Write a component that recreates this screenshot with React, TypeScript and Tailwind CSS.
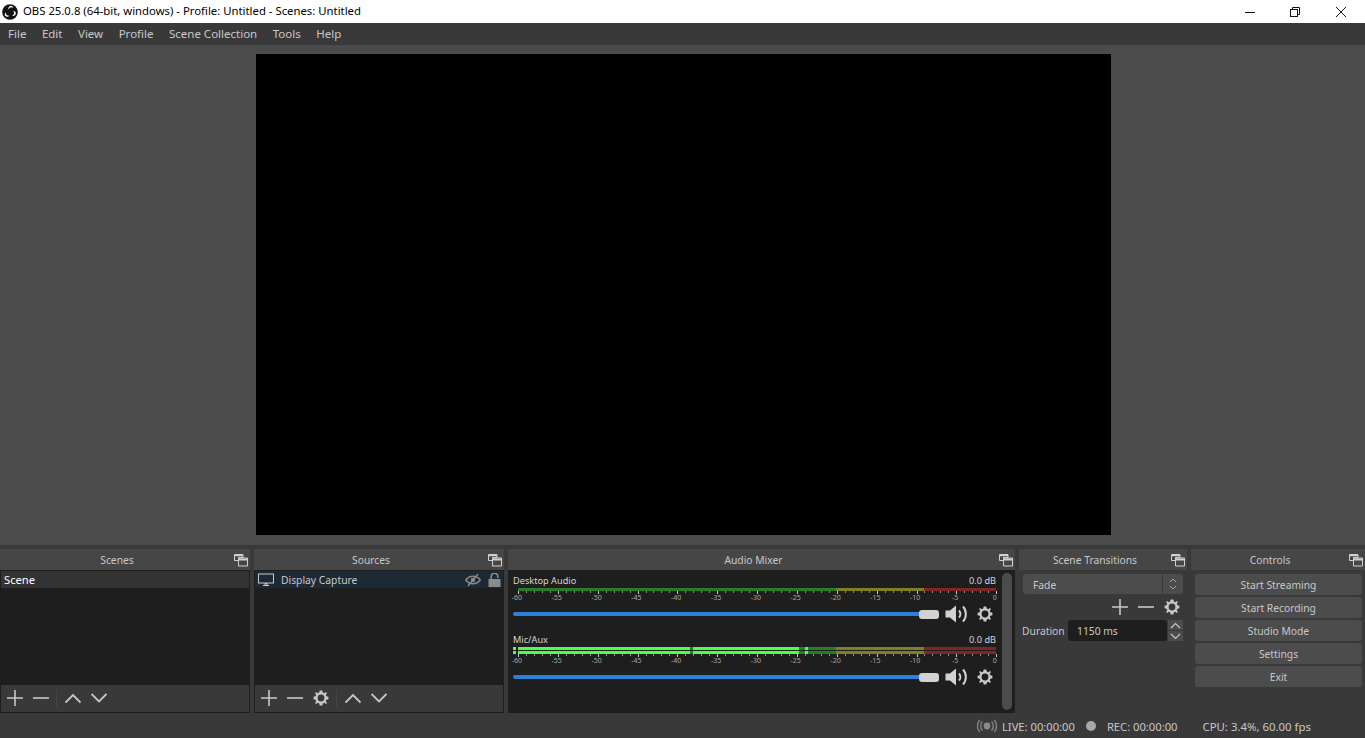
import React from "react";

const cog = "M8 0.6 L9.3 0.6 L9.8 2.6 L11.2 3.2 L13 2.1 L13.9 3 L12.8 4.8 L13.4 6.2 L15.4 6.7 L15.4 9.3 L13.4 9.8 L12.8 11.2 L13.9 13 L13 13.9 L11.2 12.8 L9.8 13.4 L9.3 15.4 L6.7 15.4 L6.2 13.4 L4.8 12.8 L3 13.9 L2.1 13 L3.2 11.2 L2.6 9.8 L0.6 9.3 L0.6 6.7 L2.6 6.2 L3.2 4.8 L2.1 3 L3 2.1 L4.8 3.2 L6.2 2.6 L6.7 0.6 Z";

function Gear() {
  return (
    <svg width="16" height="16" viewBox="0 0 16 16">
      <path d={cog} fill="#c8c8c8" />
      <circle cx="8" cy="8" r="3.4" fill="#3a393a" />
    </svg>
  );
}
function GearDark() {
  return (
    <svg width="16" height="16" viewBox="0 0 16 16">
      <path d={cog} fill="#c8c8c8" />
      <circle cx="8" cy="8" r="3.4" fill="#1f1e1f" />
    </svg>
  );
}
function Plus() {
  return (
    <svg width="16" height="16" viewBox="0 0 16 16">
      <path d="M8 0v16M0 8h16" stroke="#c8c8c8" strokeWidth="1.6" />
    </svg>
  );
}
function Minus() {
  return (
    <svg width="16" height="16" viewBox="0 0 16 16">
      <path d="M0 8h16" stroke="#c8c8c8" strokeWidth="1.6" />
    </svg>
  );
}
function Up() {
  return (
    <svg width="16" height="16" viewBox="0 0 16 16">
      <path d="M0.5 12.5L8 5l7.5 7.5" fill="none" stroke="#c8c8c8" strokeWidth="1.8" />
    </svg>
  );
}
function Down() {
  return (
    <svg width="16" height="16" viewBox="0 0 16 16">
      <path d="M0.5 4L8 11.5 15.5 4" fill="none" stroke="#c8c8c8" strokeWidth="1.8" />
    </svg>
  );
}
function Floating() {
  return (
    <svg width="14" height="14" viewBox="0 0 14 14" fill="none">
      <path d="M0.5 1.5h8.5v3H4.5v3h-4z" stroke="#d0d0d0" strokeWidth="1" />
      <path d="M4.5 5h9v8h-9z" fill="#464646" stroke="#d0d0d0" strokeWidth="1" />
      <path d="M4.5 6.5h9" stroke="#d0d0d0" strokeWidth="2" />
      <path d="M0.5 2.5h8.5" stroke="#d0d0d0" strokeWidth="1.5" />
    </svg>
  );
}
function Speaker() {
  return (
    <svg width="24" height="18" viewBox="0 0 24 18" fill="none">
      <path d="M0.5 5.5H5L11 0.5V17.5L5 12.5H0.5Z" fill="#d2d2d2" />
      <path d="M14 5.5C15.8 7.5 15.8 10.5 14 12.5" stroke="#d2d2d2" strokeWidth="2" />
      <path d="M18 1.5C21.8 5.5 21.8 12.5 18 16.5" stroke="#d2d2d2" strokeWidth="2" />
    </svg>
  );
}

function Dock({ title, className, children }: { title: string; className: string; children: React.ReactNode }) {
  return (
    <section className={"flex flex-col " + className}>
      <header className="flex h-[21px] shrink-0 items-center bg-[#464646] pr-[2px]">
        <span className="flex-1 pt-[2px] text-center leading-[19px] text-[#c8c8c8]">{title}</span>
        <Floating />
      </header>
      {children}
    </section>
  );
}

function ToolBtn({ children }: { children: React.ReactNode }) {
  return <button className="flex h-[26px] w-[26px] items-center justify-center">{children}</button>;
}

function ListFrame({ children, tools }: { children: React.ReactNode; tools: React.ReactNode }) {
  return (
    <div className="flex min-h-0 flex-1 flex-col border border-[#1f1e1f]">
      <div className="flex-1 bg-[#1f1e1f]">{children}</div>
      <div className="flex h-[27px] shrink-0 items-center bg-[#3a393a] pb-[1px] pl-[1px]">{tools}</div>
    </div>
  );
}

const labels = ["-60", "-55", "-50", "-45", "-40", "-35", "-30", "-25", "-20", "-15", "-10", "-5", "0"];

function Meter({ active }: { active: boolean }) {
  const ticks = Array.from({ length: 61 }, (_, i) => i);
  const x0 = 5;
  const h = active ? 7 : 3;
  const rows = active ? [0, 4] : [0];
  const rh = 3;
  return (
    <div>
      <svg width="485" height={h + 3} className="block">
        {rows.map((y) => (
          <g key={y}>
            <rect x={x0} y={y} width="318" height={rh} fill="#267f26" />
            <rect x={x0 + 318} y={y} width="88" height={rh} fill="#7f7f26" />
            <rect x={x0 + 406} y={y} width="72" height={rh} fill="#7f2626" />
            {active && (
              <>
                <rect x="0" y={y} width="3" height={rh} fill="#4cff4c" />
                <rect x={x0} y={y} width="172" height={rh} fill="#4cff4c" />
                <rect x={x0 + 175} y={y} width="106" height={rh} fill="#4cff4c" />
                <rect x={x0 + 287} y={y} width="3" height={rh} fill="#4cff4c" />
              </>
            )}
          </g>
        ))}
        {ticks.map((i) => (
          <rect
            key={i}
            x={Math.round(x0 + i * 7.97)}
            y={h}
            width="1"
            height={i % 5 === 0 ? 3 : 2}
            fill={i % 5 === 0 ? "#c8c8c8" : "#8a8a8a"}
          />
        ))}
      </svg>
      <div className="ml-[-16px] flex w-[518px] text-[7px] leading-[8px] text-[#a8a8a8]">
        {labels.map((l) => (
          <span key={l} className="w-[39.84px] shrink-0 text-center">
            {l}
          </span>
        ))}
      </div>
    </div>
  );
}

function Channel({ name, active }: { name: string; active: boolean }) {
  return (
    <div className="flex flex-col">
      <div className="flex h-[16px] w-[483px] items-center justify-between text-[9.2px] leading-[16px] text-[#d4d4d4]">
        <span className="pt-[2px]">{name}</span>
        <span className="pt-[2px]">0.0 dB</span>
      </div>
      <Meter active={active} />
      <div className="mt-[3px] flex items-center">
        <div className="flex w-[426px] items-center">
          <div className="h-[4px] w-[406px] rounded-l-full bg-[#2a82da]" />
          <div className="h-[9px] w-[20px] shrink-0 rounded-[3px] bg-[#d2d2d2]" />
        </div>
        <span className="ml-[6px] flex w-[24px] justify-center">
          <Speaker />
        </span>
        <span className="ml-[7px] flex w-[17px] justify-center">
          <GearDark />
        </span>
      </div>
    </div>
  );
}

function CtlBtn({ children }: { children: React.ReactNode }) {
  return (
    <button className="h-[21px] w-[167px] rounded-[3px] bg-[#4c4c4c] pt-[2px] leading-[19px] text-[#c8c8c8]">{children}</button>
  );
}

export default function App() {
  return (
    <div
      className="flex h-[738px] w-[1365px] flex-col overflow-hidden bg-[#3a393a] text-[10.3px] text-[#c8c8c8]"
      style={{ fontFamily: '"Noto Sans", sans-serif' }}
    >
      <div className="flex h-[23px] shrink-0 items-center bg-white text-black">
        <svg width="16" height="16" viewBox="0 0 16 16" className="ml-[2px]">
          <circle cx="8" cy="8" r="7.8" fill="#111" />
          <path d="M8.6 1.8a3.2 3.2 0 0 1 2.9 2.1 3.8 3.8 0 0 0-5 1.6 3.2 3.2 0 0 1 2.1-3.7Z" fill="#fff" />
          <path d="M13.6 10.6a3.2 3.2 0 0 1-3.4 1.3 3.8 3.8 0 0 0 1.1-5.2 3.2 3.2 0 0 1 2.3 3.9Z" fill="#fff" />
          <path d="M3.1 11.8a3.2 3.2 0 0 1 .5-3.6 3.8 3.8 0 0 0 3.9 3.5 3.2 3.2 0 0 1-4.4.1Z" fill="#fff" />
        </svg>
        <span className="ml-[5px] text-[11.33px]">OBS 25.0.8 (64-bit, windows) - Profile: Untitled - Scenes: Untitled</span>
        <div className="ml-auto mr-[1px] flex h-full items-center">
          <span className="flex w-[45px] justify-center pl-[1px]">
            <svg width="10" height="10" viewBox="0 0 10 10">
              <path d="M0 5.5h10" stroke="#111" />
            </svg>
          </span>
          <span className="flex w-[46px] justify-center">
            <svg width="10" height="10" viewBox="0 0 10 10" fill="none">
              <path d="M2.5 2.5V0.5h7v7h-2" stroke="#111" />
              <rect x="0.5" y="2.5" width="7" height="7" stroke="#111" />
            </svg>
          </span>
          <span className="flex w-[46px] justify-center">
            <svg width="10" height="10" viewBox="0 0 10 10">
              <path d="M0 0l10 10M10 0L0 10" stroke="#111" />
            </svg>
          </span>
        </div>
      </div>

      <nav className="flex h-[22px] shrink-0 items-center gap-[15.5px] pl-[8px] text-[11.5px] leading-[22px] text-[#c8c8c8]">
        {["File", "Edit", "View", "Profile", "Scene Collection", "Tools", "Help"].map((m) => (
          <span key={m}>{m}</span>
        ))}
      </nav>

      <main className="flex h-[500px] shrink-0 items-center justify-center bg-[#4c4c4c] pb-[1px] pl-[2px]">
        <div className="h-[481px] w-[855px] bg-black" />
      </main>

      <div className="mt-[4px] flex h-[164px] shrink-0 gap-[4px]">
        <Dock title="Scenes" className="w-[250px]">
          <ListFrame
            tools={
              <>
                <ToolBtn><Plus /></ToolBtn>
                <ToolBtn><Minus /></ToolBtn>
                <span className="ml-[2px] mr-[3px] h-[18px] w-px bg-[#444]" />
                <ToolBtn><Up /></ToolBtn>
                <ToolBtn><Down /></ToolBtn>
              </>
            }
          >
            <div className="flex h-[17px] items-center bg-[#333333] pl-[3px] text-[11.2px] text-white">
              <span className="pt-[2px]">Scene</span>
            </div>
          </ListFrame>
        </Dock>

        <Dock title="Sources" className="w-[250px]">
          <ListFrame
            tools={
              <>
                <ToolBtn><Plus /></ToolBtn>
                <ToolBtn><Minus /></ToolBtn>
                <ToolBtn><Gear /></ToolBtn>
                <span className="ml-[2px] mr-[3px] h-[18px] w-px bg-[#444]" />
                <ToolBtn><Up /></ToolBtn>
                <ToolBtn><Down /></ToolBtn>
              </>
            }
          >
            <div className="flex h-[17px] items-center bg-[#1d2a36] pl-[3px] pr-[2px]">
              <svg width="16" height="14" viewBox="0 0 16 14" fill="none">
                <rect x="0.5" y="1" width="15" height="9" stroke="#c8c8c8" />
                <path d="M5 12.5h6M7 10.5h2v2H7z" stroke="#c8c8c8" />
              </svg>
              <span className="ml-[7px] pt-[2px]">Display Capture</span>
              <svg width="16" height="14" viewBox="0 0 16 14" fill="none" className="ml-auto">
                <path d="M0.8 7C4.5 2 11.5 2 15.2 7C11.5 12 4.5 12 0.8 7Z" stroke="#8a8a8a" strokeWidth="1.4" />
                <circle cx="8" cy="7" r="2.2" fill="#8a8a8a" />
                <path d="M3 13L13 1" stroke="#8a8a8a" strokeWidth="1.4" />
              </svg>
              <svg width="13" height="14" viewBox="0 0 13 14" fill="none" className="ml-[7px]">
                <path d="M3.2 6V3.6a3.3 3.3 0 0 1 6.6 0V5" stroke="#8a8a8a" strokeWidth="1.6" />
                <rect x="0.5" y="6" width="12" height="8" fill="#8a8a8a" />
              </svg>
            </div>
          </ListFrame>
        </Dock>

        <Dock title="Audio Mixer" className="w-[507px]">
          <div className="flex flex-1 bg-[#1f1e1f] pl-[5px] pr-[3px]">
            <div className="flex min-w-0 flex-1 flex-col gap-[8px] pt-[2px]">
              <Channel name="Desktop Audio" active={false} />
              <Channel name="Mic/Aux" active={true} />
            </div>
            <div className="my-[3px] w-[10px] shrink-0 rounded-full bg-[#4c4c4c]" />
          </div>
        </Dock>

        <Dock title="Scene Transitions" className="w-[168px]">
          <div className="flex flex-1 flex-col px-[4px] pt-[4px]">
            <div className="flex h-[20px] items-center rounded-[3px] bg-[#4c4c4c] pl-[10px]">
              <span className="flex-1 pt-[4px]">Fade</span>
              <span className="flex h-full w-[21px] items-center justify-center border-l border-[#3a393a]">
                <svg width="8" height="14" viewBox="0 0 8 14" fill="none">
                  <path d="M1 5l3-3 3 3M1 9l3 3 3-3" stroke="#a8a8a8" />
                </svg>
              </span>
            </div>
            <div className="mr-[-2px] flex h-[26px] items-center justify-end">
              <ToolBtn><Plus /></ToolBtn>
              <ToolBtn><Minus /></ToolBtn>
              <ToolBtn><Gear /></ToolBtn>
            </div>
            <div className="flex h-[21px] items-center">
              <span className="ml-[-1px] w-[46px] pt-[2px]">Duration</span>
              <div className="flex h-full w-[99px] items-center rounded-[3px] bg-[#1f1e1f] pl-[9px]">
                <span className="pt-[2px]">1150 ms</span>
              </div>
              <div className="ml-[1px] flex flex-col items-center gap-[1px]">
                <span className="flex h-[10px] w-[15px] items-center justify-center bg-[#4c4c4c]">
                  <svg width="11" height="7" viewBox="0 0 11 7" fill="none">
                    <path d="M1 6l4.5-4.5L10 6" stroke="#c8c8c8" strokeWidth="1.2" />
                  </svg>
                </span>
                <span className="flex h-[10px] w-[15px] items-center justify-center bg-[#4c4c4c]">
                  <svg width="11" height="7" viewBox="0 0 11 7" fill="none">
                    <path d="M1 1l4.5 4.5L10 1" stroke="#c8c8c8" strokeWidth="1.2" />
                  </svg>
                </span>
              </div>
            </div>
          </div>
        </Dock>

        <Dock title="Controls" className="w-[174px]">
          <div className="flex flex-col gap-[2px] pl-[4px] pt-[4px]">
            <CtlBtn>Start Streaming</CtlBtn>
            <CtlBtn>Start Recording</CtlBtn>
            <CtlBtn>Studio Mode</CtlBtn>
            <CtlBtn>Settings</CtlBtn>
            <CtlBtn>Exit</CtlBtn>
          </div>
        </Dock>
      </div>

      <footer className="flex h-[25px] shrink-0 items-center pl-[977px] text-[11.2px] leading-[25px]">
        <svg width="20" height="14" viewBox="0 0 20 14" fill="none">
          <circle cx="10" cy="7" r="3.4" fill="#8a8a8a" />
          <path d="M5.5 2.5a6.5 6.5 0 0 0 0 9M14.5 2.5a6.5 6.5 0 0 1 0 9" stroke="#8a8a8a" strokeWidth="1.3" />
          <path d="M2.8 0.8a9.5 9.5 0 0 0 0 12.4M17.2 0.8a9.5 9.5 0 0 1 0 12.4" stroke="#8a8a8a" strokeWidth="1.3" />
        </svg>
        <span className="ml-[5px] pt-[2px]">LIVE: 00:00:00</span>
        <span className="ml-[11px] h-[10px] w-[10px] rounded-full bg-[#a8a8a8]" />
        <span className="ml-[11px] pt-[2px]">REC: 00:00:00</span>
        <span className="ml-[25px] pt-[2px] text-[11.4px]">CPU: 3.4%, 60.00 fps</span>
      </footer>
    </div>
  );
}
